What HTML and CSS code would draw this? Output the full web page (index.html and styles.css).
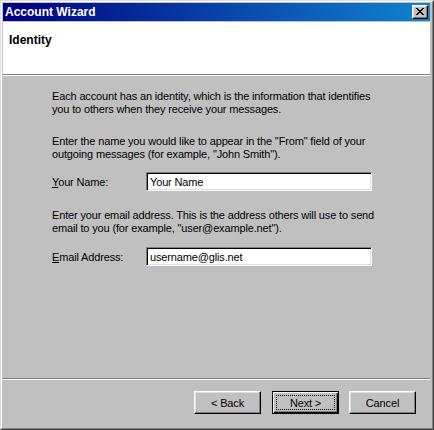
FILE: index.html
```html
<!DOCTYPE html>
<html>
	<head>
		<meta charset="utf-8">
		<title>Account Wizard</title>
		<link rel="stylesheet" href="styles.css">
	</head>
	<body>
		<div class="window">
			<div class="frame">
				<div class="titlebar">
					<span class="title">Account Wizard</span>
					<span class="close">
						<svg width="8" height="7" viewBox="0 0 8 7" shape-rendering="crispEdges">
							<path fill="#000" d="M0 0h2v1H0zM6 0h2v1H6zM1 1h2v1H1zM5 1h2v1H5zM2 2h4v1H2zM3 3h2v1H3zM2 4h4v1H2zM1 5h2v1H1zM5 5h2v1H5zM0 6h2v1H0zM6 6h2v1H6z"/>
						</svg>
					</span>
				</div>
				<div class="header">
					<h1>Identity</h1>
				</div>
				<div class="content">
					<p class="intro">Each account has an identity, which is the information that identifies you to others when they receive your messages.</p>
					<p class="hint">Enter the name you would like to appear in the "From" field of your outgoing messages (for example, "John Smith").</p>
					<div class="field name-field">
						<label for="name"><u>Y</u>our Name:</label>
						<input id="name" type="text" value="Your Name">
					</div>
					<p class="hint email-hint">Enter your email address. This is the address others will use to send email to you (for example, "user@example.net").</p>
					<div class="field email-field">
						<label for="email"><u>E</u>mail Address:</label>
						<input id="email" type="text" value="username@glis.net">
					</div>
				</div>
				<div class="footer">
					<button class="btn back"><span>&lt; Back</span></button>
					<button class="btn default"><span>Next &gt;</span></button>
					<button class="btn"><span>Cancel</span></button>
				</div>
			</div>
		</div>
	</body>
</html>
```

FILE: styles.css
```css
body {
	color: #000;
	font-family: "Liberation Sans", Arial, sans-serif;
	font-size: 11px;
	margin: 0;
}
.window {
	background: #c0c0c0;
	border: 1px solid;
	border-color: #dfdfdf #404040 #404040 #dfdfdf;
	box-sizing: border-box;
	height: 430px;
	width: 434px;
}
.frame {
	border: 1px solid;
	border-color: #fff #808080 #808080 #fff;
	box-sizing: border-box;
	display: flex;
	flex-direction: column;
	height: 100%;
	padding: 1px 2px 0 1px;
}
.titlebar {
	align-items: center;
	background: linear-gradient(to right, #000080, #1084d0);
	color: #fff;
	display: flex;
	font-size: 12px;
	font-weight: bold;
	height: 18px;
	justify-content: space-between;
	margin-bottom: 1px;
	padding: 0 2px;
}
.close {
	background: #c0c0c0;
	border: 1px solid;
	border-color: #fff #000 #000 #fff;
	box-shadow: inset -1px -1px #808080, inset 1px 1px #dfdfdf;
	box-sizing: border-box;
	display: block;
	height: 14px;
	padding: 2px 0 0 3px;
	width: 16px;
}
.close svg {
	display: block;
}
.header {
	background: #fff;
	border-bottom: 1px solid #808080;
	box-sizing: border-box;
	height: 53px;
	padding: 11px 6px 0;
}
.header h1 {
	font-size: 12px;
	line-height: 14px;
	margin: 0;
}
.content {
	border-top: 1px solid #fff;
	flex: 1;
	padding: 14px 0 0 49px;
}
.content p {
	letter-spacing: -0.15px;
	line-height: 13px;
	margin: 0;
	width: 330px;
}
.content p.hint {
	margin-top: 19px;
}
.content p.email-hint {
	margin-top: 18px;
}
.field {
	align-items: center;
	display: flex;
	letter-spacing: -0.15px;
}
.name-field {
	margin-top: 11px;
}
.email-field {
	margin-top: 12px;
}
.field label {
	width: 94px;
}
.field input {
	background: #fff;
	border: 1px solid;
	border-color: #808080 #fff #fff #808080;
	box-shadow: inset 1px 1px #000, inset -1px -1px #dfdfdf;
	box-sizing: border-box;
	color: #000;
	font: inherit;
	height: 19px;
	letter-spacing: -0.15px;
	margin: 0;
	outline: none;
	padding: 0 0 0 3px;
	width: 226px;
}
.footer {
	border-top: 1px solid #808080;
	box-shadow: inset 0 1px #fff;
	display: flex;
	gap: 10px;
	justify-content: flex-end;
	padding: 12px 14px 14px 0;
}
.btn {
	background: #c0c0c0;
	border: 1px solid;
	border-color: #fff #000 #000 #fff;
	box-shadow: inset -1px -1px #808080, inset 1px 1px #dfdfdf;
	box-sizing: border-box;
	color: #000;
	display: flex;
	font: inherit;
	height: 23px;
	letter-spacing: -0.15px;
	margin: 0;
	padding: 3px;
	width: 67px;
}
.btn span {
	align-items: center;
	border: 1px dotted transparent;
	display: flex;
	flex: 1;
	justify-content: center;
}
.btn.back {
	margin-right: 1px;
}
.btn.default {
	border-color: #000;
	box-shadow: inset 1px 1px #fff, inset -1px -1px #000, inset -2px -2px #808080;
}
.btn.default span {
	border-color: #000;
}
```
